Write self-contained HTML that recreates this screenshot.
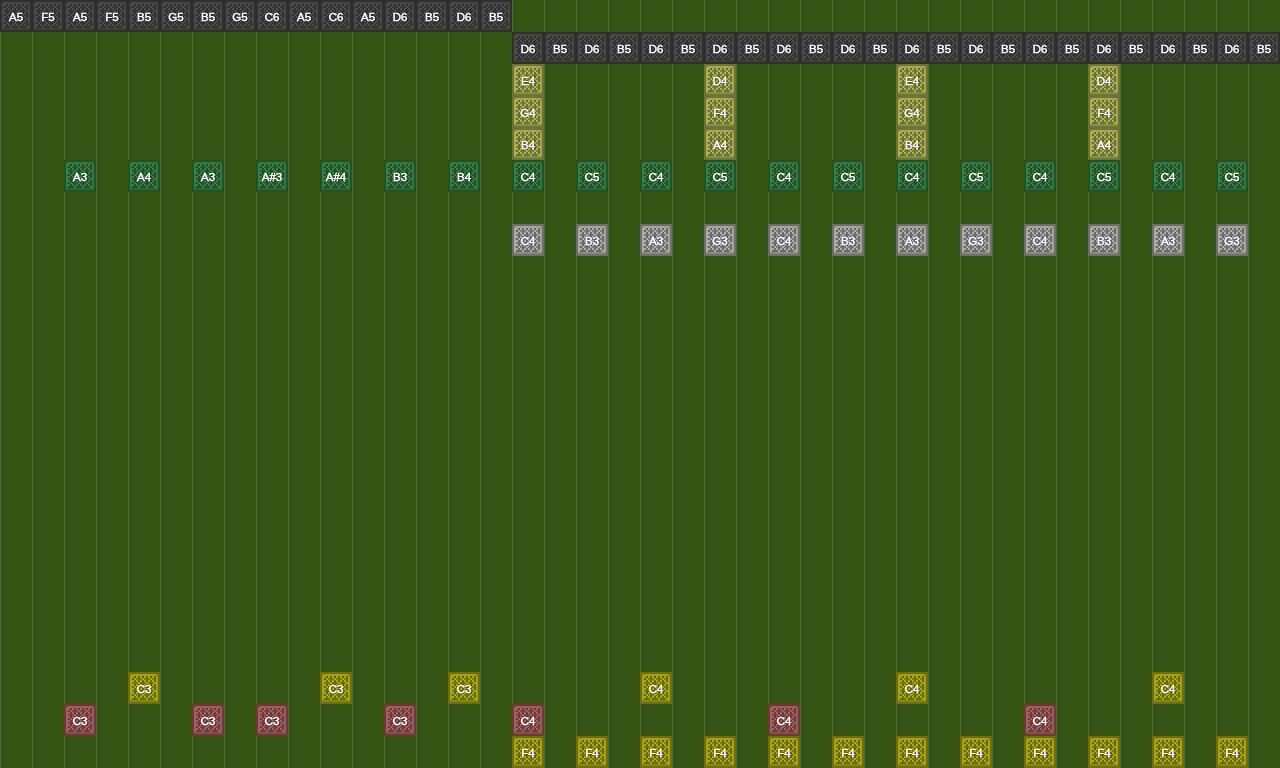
<!DOCTYPE html><html><head><meta charset="utf-8"><title>Note grid</title><style>
html,body{margin:0;padding:0}
body{width:1280px;height:768px;overflow:hidden;position:relative;background:#365414;font-family:"Liberation Sans",sans-serif}
#grid{position:absolute;left:0;top:0;width:1280px;height:768px;background-image:linear-gradient(90deg,#546d38 1px,transparent 1px);background-size:32px 32px}
.n{position:absolute;width:32px;height:32px;color:#fff;font-size:10px;-webkit-text-stroke:0.38px #fff;text-align:center;text-shadow:0 0 2px rgba(0,0,0,.8)}
.n svg{position:absolute;left:0;top:0;width:32px;height:32px;shape-rendering:crispEdges}
.n span{position:absolute;left:-4px;top:0;width:40px;height:32px;line-height:36px;transform:scaleX(1.15);will-change:transform;white-space:nowrap}
.tb{fill:var(--b)}.tft{fill:var(--ft)}.tfl{fill:var(--fl)}.tfr{fill:var(--fr)}.tfb{fill:var(--fb)}.tc{fill:var(--c)}.tf2{fill:var(--f2)}.tl{fill:var(--l)}.tm{fill:var(--m)}.td{fill:var(--d)}.te{fill:var(--e)}
.ck{--b:#2f2f2f;--ft:#494949;--fl:#4c4c4c;--fr:#474747;--fb:#3f3f3f;--c:#424242;--f2:#444444;--l:#4c4c4c;--m:#373737;--d:#323232;--e:#2d2d2d}
.co{--b:#6e7335;--ft:#a5ac50;--fl:#abb253;--fr:#a3aa4f;--fb:#898f42;--c:#909646;--f2:#a0a64d;--l:#abb253;--m:#7d833d;--d:#6c7134;--e:#636730}
.cg{--b:#23522a;--ft:#347c3f;--fl:#368041;--fr:#347a3e;--fb:#2b6634;--c:#2e6c37;--f2:#32773c;--l:#368041;--m:#285e30;--d:#225129;--e:#1f4a25}
.cs{--b:#6e6e6e;--ft:#a7a7a7;--fl:#adadad;--fr:#a3a3a3;--fb:#898989;--c:#909090;--f2:#a0a0a0;--l:#adadad;--m:#7d7d7d;--d:#6c6c6c;--e:#636363}
.cy{--b:#6e6e0e;--ft:#a2a215;--fl:#a7a716;--fr:#a3a316;--fb:#898912;--c:#909013;--f2:#a0a015;--l:#a9a916;--m:#7d7d10;--d:#6c6c0e;--e:#63630d}
.cp{--b:#683a3a;--ft:#a55d5d;--fl:#a85f5f;--fr:#a05a5a;--fb:#894d4d;--c:#905151;--f2:#a05a5a;--l:#a85f5f;--m:#7d4747;--d:#6c3d3d;--e:#633838}
</style></head><body>
<svg width="0" height="0" style="position:absolute"><defs><symbol id="t" viewBox="0 0 16 16"><rect x="0" y="0" width="16" height="16" class="tb"/><rect x="1" y="1" width="14" height="1" class="tft"/><rect x="1" y="2" width="1" height="12" class="tfl"/><rect x="14" y="2" width="1" height="12" class="tfr"/><rect x="1" y="14" width="14" height="1" class="tfb"/><rect x="1" y="1" width="1" height="1" class="tc"/><rect x="14" y="1" width="1" height="1" class="tc"/><rect x="2" y="2" width="12" height="12" class="tl"/><rect x="4" y="1" width="1" height="1" class="tf2"/><rect x="8" y="1" width="1" height="1" class="tf2"/><rect x="12" y="1" width="1" height="1" class="tf2"/><rect x="1" y="3" width="1" height="1" class="tf2"/><rect x="1" y="7" width="1" height="1" class="tf2"/><rect x="1" y="11" width="1" height="1" class="tf2"/><rect x="14" y="2" width="1" height="1" class="tf2"/><rect x="14" y="4" width="1" height="1" class="tf2"/><rect x="14" y="6" width="1" height="1" class="tf2"/><rect x="14" y="8" width="1" height="1" class="tf2"/><rect x="14" y="10" width="1" height="1" class="tf2"/><rect x="14" y="12" width="1" height="1" class="tf2"/><rect x="3" y="2" width="1" height="1" class="te"/><rect x="5" y="2" width="1" height="1" class="td"/><rect x="7" y="2" width="1" height="1" class="te"/><rect x="9" y="2" width="1" height="1" class="td"/><rect x="11" y="2" width="1" height="1" class="te"/><rect x="13" y="2" width="1" height="1" class="td"/><rect x="2" y="3" width="1" height="1" class="te"/><rect x="4" y="3" width="1" height="1" class="tm"/><rect x="5" y="3" width="1" height="1" class="td"/><rect x="6" y="3" width="1" height="1" class="tm"/><rect x="8" y="3" width="1" height="1" class="tm"/><rect x="9" y="3" width="1" height="1" class="td"/><rect x="10" y="3" width="1" height="1" class="tm"/><rect x="12" y="3" width="1" height="1" class="tm"/><rect x="13" y="3" width="1" height="1" class="td"/><rect x="3" y="4" width="1" height="1" class="td"/><rect x="5" y="4" width="1" height="1" class="td"/><rect x="7" y="4" width="1" height="1" class="td"/><rect x="9" y="4" width="1" height="1" class="td"/><rect x="11" y="4" width="1" height="1" class="td"/><rect x="13" y="4" width="1" height="1" class="td"/><rect x="2" y="5" width="1" height="1" class="tm"/><rect x="3" y="5" width="1" height="1" class="td"/><rect x="4" y="5" width="1" height="1" class="tm"/><rect x="6" y="5" width="1" height="1" class="tm"/><rect x="7" y="5" width="1" height="1" class="td"/><rect x="8" y="5" width="1" height="1" class="tm"/><rect x="10" y="5" width="1" height="1" class="tm"/><rect x="11" y="5" width="1" height="1" class="td"/><rect x="12" y="5" width="1" height="1" class="tm"/><rect x="3" y="6" width="1" height="1" class="te"/><rect x="5" y="6" width="1" height="1" class="td"/><rect x="7" y="6" width="1" height="1" class="te"/><rect x="9" y="6" width="1" height="1" class="td"/><rect x="11" y="6" width="1" height="1" class="te"/><rect x="13" y="6" width="1" height="1" class="td"/><rect x="2" y="7" width="1" height="1" class="te"/><rect x="4" y="7" width="1" height="1" class="tm"/><rect x="5" y="7" width="1" height="1" class="td"/><rect x="6" y="7" width="1" height="1" class="tm"/><rect x="8" y="7" width="1" height="1" class="tm"/><rect x="9" y="7" width="1" height="1" class="td"/><rect x="10" y="7" width="1" height="1" class="tm"/><rect x="12" y="7" width="1" height="1" class="tm"/><rect x="13" y="7" width="1" height="1" class="td"/><rect x="3" y="8" width="1" height="1" class="td"/><rect x="5" y="8" width="1" height="1" class="td"/><rect x="7" y="8" width="1" height="1" class="td"/><rect x="9" y="8" width="1" height="1" class="td"/><rect x="11" y="8" width="1" height="1" class="td"/><rect x="13" y="8" width="1" height="1" class="td"/><rect x="2" y="9" width="1" height="1" class="tm"/><rect x="3" y="9" width="1" height="1" class="td"/><rect x="4" y="9" width="1" height="1" class="tm"/><rect x="6" y="9" width="1" height="1" class="tm"/><rect x="7" y="9" width="1" height="1" class="td"/><rect x="8" y="9" width="1" height="1" class="tm"/><rect x="10" y="9" width="1" height="1" class="tm"/><rect x="11" y="9" width="1" height="1" class="td"/><rect x="12" y="9" width="1" height="1" class="tm"/><rect x="3" y="10" width="1" height="1" class="te"/><rect x="5" y="10" width="1" height="1" class="td"/><rect x="7" y="10" width="1" height="1" class="te"/><rect x="9" y="10" width="1" height="1" class="td"/><rect x="11" y="10" width="1" height="1" class="te"/><rect x="13" y="10" width="1" height="1" class="td"/><rect x="2" y="11" width="1" height="1" class="te"/><rect x="4" y="11" width="1" height="1" class="tm"/><rect x="5" y="11" width="1" height="1" class="td"/><rect x="6" y="11" width="1" height="1" class="tm"/><rect x="8" y="11" width="1" height="1" class="tm"/><rect x="9" y="11" width="1" height="1" class="td"/><rect x="10" y="11" width="1" height="1" class="tm"/><rect x="12" y="11" width="1" height="1" class="tm"/><rect x="13" y="11" width="1" height="1" class="td"/><rect x="3" y="12" width="1" height="1" class="td"/><rect x="5" y="12" width="1" height="1" class="td"/><rect x="7" y="12" width="1" height="1" class="td"/><rect x="9" y="12" width="1" height="1" class="td"/><rect x="11" y="12" width="1" height="1" class="td"/><rect x="13" y="12" width="1" height="1" class="td"/><rect x="2" y="13" width="3" height="1" class="td"/><rect x="6" y="13" width="3" height="1" class="td"/><rect x="10" y="13" width="3" height="1" class="td"/></symbol></defs></svg>
<div id="grid"></div>
<div class="n ck" style="left:0px;top:0px"><svg viewBox="0 0 16 16"><use href="#t"/></svg><span>A5</span></div>
<div class="n ck" style="left:32px;top:0px"><svg viewBox="0 0 16 16"><use href="#t"/></svg><span>F5</span></div>
<div class="n ck" style="left:64px;top:0px"><svg viewBox="0 0 16 16"><use href="#t"/></svg><span>A5</span></div>
<div class="n ck" style="left:96px;top:0px"><svg viewBox="0 0 16 16"><use href="#t"/></svg><span>F5</span></div>
<div class="n ck" style="left:128px;top:0px"><svg viewBox="0 0 16 16"><use href="#t"/></svg><span>B5</span></div>
<div class="n ck" style="left:160px;top:0px"><svg viewBox="0 0 16 16"><use href="#t"/></svg><span>G5</span></div>
<div class="n ck" style="left:192px;top:0px"><svg viewBox="0 0 16 16"><use href="#t"/></svg><span>B5</span></div>
<div class="n ck" style="left:224px;top:0px"><svg viewBox="0 0 16 16"><use href="#t"/></svg><span>G5</span></div>
<div class="n ck" style="left:256px;top:0px"><svg viewBox="0 0 16 16"><use href="#t"/></svg><span>C6</span></div>
<div class="n ck" style="left:288px;top:0px"><svg viewBox="0 0 16 16"><use href="#t"/></svg><span>A5</span></div>
<div class="n ck" style="left:320px;top:0px"><svg viewBox="0 0 16 16"><use href="#t"/></svg><span>C6</span></div>
<div class="n ck" style="left:352px;top:0px"><svg viewBox="0 0 16 16"><use href="#t"/></svg><span>A5</span></div>
<div class="n ck" style="left:384px;top:0px"><svg viewBox="0 0 16 16"><use href="#t"/></svg><span>D6</span></div>
<div class="n ck" style="left:416px;top:0px"><svg viewBox="0 0 16 16"><use href="#t"/></svg><span>B5</span></div>
<div class="n ck" style="left:448px;top:0px"><svg viewBox="0 0 16 16"><use href="#t"/></svg><span>D6</span></div>
<div class="n ck" style="left:480px;top:0px"><svg viewBox="0 0 16 16"><use href="#t"/></svg><span>B5</span></div>
<div class="n ck" style="left:512px;top:32px"><svg viewBox="0 0 16 16"><use href="#t"/></svg><span>D6</span></div>
<div class="n ck" style="left:544px;top:32px"><svg viewBox="0 0 16 16"><use href="#t"/></svg><span>B5</span></div>
<div class="n ck" style="left:576px;top:32px"><svg viewBox="0 0 16 16"><use href="#t"/></svg><span>D6</span></div>
<div class="n ck" style="left:608px;top:32px"><svg viewBox="0 0 16 16"><use href="#t"/></svg><span>B5</span></div>
<div class="n ck" style="left:640px;top:32px"><svg viewBox="0 0 16 16"><use href="#t"/></svg><span>D6</span></div>
<div class="n ck" style="left:672px;top:32px"><svg viewBox="0 0 16 16"><use href="#t"/></svg><span>B5</span></div>
<div class="n ck" style="left:704px;top:32px"><svg viewBox="0 0 16 16"><use href="#t"/></svg><span>D6</span></div>
<div class="n ck" style="left:736px;top:32px"><svg viewBox="0 0 16 16"><use href="#t"/></svg><span>B5</span></div>
<div class="n ck" style="left:768px;top:32px"><svg viewBox="0 0 16 16"><use href="#t"/></svg><span>D6</span></div>
<div class="n ck" style="left:800px;top:32px"><svg viewBox="0 0 16 16"><use href="#t"/></svg><span>B5</span></div>
<div class="n ck" style="left:832px;top:32px"><svg viewBox="0 0 16 16"><use href="#t"/></svg><span>D6</span></div>
<div class="n ck" style="left:864px;top:32px"><svg viewBox="0 0 16 16"><use href="#t"/></svg><span>B5</span></div>
<div class="n ck" style="left:896px;top:32px"><svg viewBox="0 0 16 16"><use href="#t"/></svg><span>D6</span></div>
<div class="n ck" style="left:928px;top:32px"><svg viewBox="0 0 16 16"><use href="#t"/></svg><span>B5</span></div>
<div class="n ck" style="left:960px;top:32px"><svg viewBox="0 0 16 16"><use href="#t"/></svg><span>D6</span></div>
<div class="n ck" style="left:992px;top:32px"><svg viewBox="0 0 16 16"><use href="#t"/></svg><span>B5</span></div>
<div class="n ck" style="left:1024px;top:32px"><svg viewBox="0 0 16 16"><use href="#t"/></svg><span>D6</span></div>
<div class="n ck" style="left:1056px;top:32px"><svg viewBox="0 0 16 16"><use href="#t"/></svg><span>B5</span></div>
<div class="n ck" style="left:1088px;top:32px"><svg viewBox="0 0 16 16"><use href="#t"/></svg><span>D6</span></div>
<div class="n ck" style="left:1120px;top:32px"><svg viewBox="0 0 16 16"><use href="#t"/></svg><span>B5</span></div>
<div class="n ck" style="left:1152px;top:32px"><svg viewBox="0 0 16 16"><use href="#t"/></svg><span>D6</span></div>
<div class="n ck" style="left:1184px;top:32px"><svg viewBox="0 0 16 16"><use href="#t"/></svg><span>B5</span></div>
<div class="n ck" style="left:1216px;top:32px"><svg viewBox="0 0 16 16"><use href="#t"/></svg><span>D6</span></div>
<div class="n ck" style="left:1248px;top:32px"><svg viewBox="0 0 16 16"><use href="#t"/></svg><span>B5</span></div>
<div class="n co" style="left:512px;top:64px"><svg viewBox="0 0 16 16"><use href="#t"/></svg><span>E4</span></div>
<div class="n co" style="left:512px;top:96px"><svg viewBox="0 0 16 16"><use href="#t"/></svg><span>G4</span></div>
<div class="n co" style="left:512px;top:128px"><svg viewBox="0 0 16 16"><use href="#t"/></svg><span>B4</span></div>
<div class="n co" style="left:704px;top:64px"><svg viewBox="0 0 16 16"><use href="#t"/></svg><span>D4</span></div>
<div class="n co" style="left:704px;top:96px"><svg viewBox="0 0 16 16"><use href="#t"/></svg><span>F4</span></div>
<div class="n co" style="left:704px;top:128px"><svg viewBox="0 0 16 16"><use href="#t"/></svg><span>A4</span></div>
<div class="n co" style="left:896px;top:64px"><svg viewBox="0 0 16 16"><use href="#t"/></svg><span>E4</span></div>
<div class="n co" style="left:896px;top:96px"><svg viewBox="0 0 16 16"><use href="#t"/></svg><span>G4</span></div>
<div class="n co" style="left:896px;top:128px"><svg viewBox="0 0 16 16"><use href="#t"/></svg><span>B4</span></div>
<div class="n co" style="left:1088px;top:64px"><svg viewBox="0 0 16 16"><use href="#t"/></svg><span>D4</span></div>
<div class="n co" style="left:1088px;top:96px"><svg viewBox="0 0 16 16"><use href="#t"/></svg><span>F4</span></div>
<div class="n co" style="left:1088px;top:128px"><svg viewBox="0 0 16 16"><use href="#t"/></svg><span>A4</span></div>
<div class="n cg" style="left:64px;top:160px"><svg viewBox="0 0 16 16"><use href="#t"/></svg><span>A3</span></div>
<div class="n cg" style="left:128px;top:160px"><svg viewBox="0 0 16 16"><use href="#t"/></svg><span>A4</span></div>
<div class="n cg" style="left:192px;top:160px"><svg viewBox="0 0 16 16"><use href="#t"/></svg><span>A3</span></div>
<div class="n cg" style="left:256px;top:160px"><svg viewBox="0 0 16 16"><use href="#t"/></svg><span>A#3</span></div>
<div class="n cg" style="left:320px;top:160px"><svg viewBox="0 0 16 16"><use href="#t"/></svg><span>A#4</span></div>
<div class="n cg" style="left:384px;top:160px"><svg viewBox="0 0 16 16"><use href="#t"/></svg><span>B3</span></div>
<div class="n cg" style="left:448px;top:160px"><svg viewBox="0 0 16 16"><use href="#t"/></svg><span>B4</span></div>
<div class="n cg" style="left:512px;top:160px"><svg viewBox="0 0 16 16"><use href="#t"/></svg><span>C4</span></div>
<div class="n cg" style="left:576px;top:160px"><svg viewBox="0 0 16 16"><use href="#t"/></svg><span>C5</span></div>
<div class="n cg" style="left:640px;top:160px"><svg viewBox="0 0 16 16"><use href="#t"/></svg><span>C4</span></div>
<div class="n cg" style="left:704px;top:160px"><svg viewBox="0 0 16 16"><use href="#t"/></svg><span>C5</span></div>
<div class="n cg" style="left:768px;top:160px"><svg viewBox="0 0 16 16"><use href="#t"/></svg><span>C4</span></div>
<div class="n cg" style="left:832px;top:160px"><svg viewBox="0 0 16 16"><use href="#t"/></svg><span>C5</span></div>
<div class="n cg" style="left:896px;top:160px"><svg viewBox="0 0 16 16"><use href="#t"/></svg><span>C4</span></div>
<div class="n cg" style="left:960px;top:160px"><svg viewBox="0 0 16 16"><use href="#t"/></svg><span>C5</span></div>
<div class="n cg" style="left:1024px;top:160px"><svg viewBox="0 0 16 16"><use href="#t"/></svg><span>C4</span></div>
<div class="n cg" style="left:1088px;top:160px"><svg viewBox="0 0 16 16"><use href="#t"/></svg><span>C5</span></div>
<div class="n cg" style="left:1152px;top:160px"><svg viewBox="0 0 16 16"><use href="#t"/></svg><span>C4</span></div>
<div class="n cg" style="left:1216px;top:160px"><svg viewBox="0 0 16 16"><use href="#t"/></svg><span>C5</span></div>
<div class="n cs" style="left:512px;top:224px"><svg viewBox="0 0 16 16"><use href="#t"/></svg><span>C4</span></div>
<div class="n cs" style="left:576px;top:224px"><svg viewBox="0 0 16 16"><use href="#t"/></svg><span>B3</span></div>
<div class="n cs" style="left:640px;top:224px"><svg viewBox="0 0 16 16"><use href="#t"/></svg><span>A3</span></div>
<div class="n cs" style="left:704px;top:224px"><svg viewBox="0 0 16 16"><use href="#t"/></svg><span>G3</span></div>
<div class="n cs" style="left:768px;top:224px"><svg viewBox="0 0 16 16"><use href="#t"/></svg><span>C4</span></div>
<div class="n cs" style="left:832px;top:224px"><svg viewBox="0 0 16 16"><use href="#t"/></svg><span>B3</span></div>
<div class="n cs" style="left:896px;top:224px"><svg viewBox="0 0 16 16"><use href="#t"/></svg><span>A3</span></div>
<div class="n cs" style="left:960px;top:224px"><svg viewBox="0 0 16 16"><use href="#t"/></svg><span>G3</span></div>
<div class="n cs" style="left:1024px;top:224px"><svg viewBox="0 0 16 16"><use href="#t"/></svg><span>C4</span></div>
<div class="n cs" style="left:1088px;top:224px"><svg viewBox="0 0 16 16"><use href="#t"/></svg><span>B3</span></div>
<div class="n cs" style="left:1152px;top:224px"><svg viewBox="0 0 16 16"><use href="#t"/></svg><span>A3</span></div>
<div class="n cs" style="left:1216px;top:224px"><svg viewBox="0 0 16 16"><use href="#t"/></svg><span>G3</span></div>
<div class="n cy" style="left:128px;top:672px"><svg viewBox="0 0 16 16"><use href="#t"/></svg><span>C3</span></div>
<div class="n cy" style="left:320px;top:672px"><svg viewBox="0 0 16 16"><use href="#t"/></svg><span>C3</span></div>
<div class="n cy" style="left:448px;top:672px"><svg viewBox="0 0 16 16"><use href="#t"/></svg><span>C3</span></div>
<div class="n cy" style="left:640px;top:672px"><svg viewBox="0 0 16 16"><use href="#t"/></svg><span>C4</span></div>
<div class="n cy" style="left:896px;top:672px"><svg viewBox="0 0 16 16"><use href="#t"/></svg><span>C4</span></div>
<div class="n cy" style="left:1152px;top:672px"><svg viewBox="0 0 16 16"><use href="#t"/></svg><span>C4</span></div>
<div class="n cp" style="left:64px;top:704px"><svg viewBox="0 0 16 16"><use href="#t"/></svg><span>C3</span></div>
<div class="n cp" style="left:192px;top:704px"><svg viewBox="0 0 16 16"><use href="#t"/></svg><span>C3</span></div>
<div class="n cp" style="left:256px;top:704px"><svg viewBox="0 0 16 16"><use href="#t"/></svg><span>C3</span></div>
<div class="n cp" style="left:384px;top:704px"><svg viewBox="0 0 16 16"><use href="#t"/></svg><span>C3</span></div>
<div class="n cp" style="left:512px;top:704px"><svg viewBox="0 0 16 16"><use href="#t"/></svg><span>C4</span></div>
<div class="n cp" style="left:768px;top:704px"><svg viewBox="0 0 16 16"><use href="#t"/></svg><span>C4</span></div>
<div class="n cp" style="left:1024px;top:704px"><svg viewBox="0 0 16 16"><use href="#t"/></svg><span>C4</span></div>
<div class="n cy" style="left:512px;top:736px"><svg viewBox="0 0 16 16"><use href="#t"/></svg><span>F4</span></div>
<div class="n cy" style="left:576px;top:736px"><svg viewBox="0 0 16 16"><use href="#t"/></svg><span>F4</span></div>
<div class="n cy" style="left:640px;top:736px"><svg viewBox="0 0 16 16"><use href="#t"/></svg><span>F4</span></div>
<div class="n cy" style="left:704px;top:736px"><svg viewBox="0 0 16 16"><use href="#t"/></svg><span>F4</span></div>
<div class="n cy" style="left:768px;top:736px"><svg viewBox="0 0 16 16"><use href="#t"/></svg><span>F4</span></div>
<div class="n cy" style="left:832px;top:736px"><svg viewBox="0 0 16 16"><use href="#t"/></svg><span>F4</span></div>
<div class="n cy" style="left:896px;top:736px"><svg viewBox="0 0 16 16"><use href="#t"/></svg><span>F4</span></div>
<div class="n cy" style="left:960px;top:736px"><svg viewBox="0 0 16 16"><use href="#t"/></svg><span>F4</span></div>
<div class="n cy" style="left:1024px;top:736px"><svg viewBox="0 0 16 16"><use href="#t"/></svg><span>F4</span></div>
<div class="n cy" style="left:1088px;top:736px"><svg viewBox="0 0 16 16"><use href="#t"/></svg><span>F4</span></div>
<div class="n cy" style="left:1152px;top:736px"><svg viewBox="0 0 16 16"><use href="#t"/></svg><span>F4</span></div>
<div class="n cy" style="left:1216px;top:736px"><svg viewBox="0 0 16 16"><use href="#t"/></svg><span>F4</span></div>
</body></html>
